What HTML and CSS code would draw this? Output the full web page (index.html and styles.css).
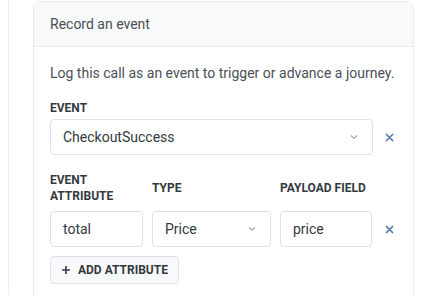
FILE: index.html
```html
<!DOCTYPE html>
<html>
<head>
<meta charset="utf-8">
<link rel="stylesheet" href="styles.css">
</head>
<body>
<div class="page">
  <div class="card">
    <div class="card-header">Record an event</div>
    <div class="card-body">
      <p class="desc">Log this call as an event to trigger or advance a journey.</p>
      <div class="label">Event</div>
      <div class="event-row">
        <div class="field select">
          <span>CheckoutSuccess</span>
          <svg class="chev" width="10" height="6" viewBox="0 0 10 6"><path d="M2 1.5 L5 4.3 L8 1.5" fill="none" stroke="#9aa0a6" stroke-width="1.1"/></svg>
        </div>
        <button class="remove" aria-label="remove">
          <svg width="9" height="9" viewBox="0 0 10 10"><path d="M1.5 1.5 L8.5 8.5 M8.5 1.5 L1.5 8.5" stroke="#5b7fb3" stroke-width="1.7" stroke-linecap="round"/></svg>
        </button>
      </div>
      <div class="attr-grid">
        <div class="label col">Event<br>attribute</div>
        <div class="label col">Type</div>
        <div class="label col">Payload field</div>
        <div></div>
        <div class="field">total</div>
        <div class="field select">
          <span>Price</span>
          <svg class="chev" width="10" height="6" viewBox="0 0 10 6"><path d="M2 1.5 L5 4.3 L8 1.5" fill="none" stroke="#9aa0a6" stroke-width="1.1"/></svg>
        </div>
        <div class="field">price</div>
        <button class="remove" aria-label="remove">
          <svg width="9" height="9" viewBox="0 0 10 10"><path d="M1.5 1.5 L8.5 8.5 M8.5 1.5 L1.5 8.5" stroke="#5b7fb3" stroke-width="1.7" stroke-linecap="round"/></svg>
        </button>
      </div>
      <button class="add-btn">
        <svg width="10" height="10" viewBox="0 0 10 10"><path d="M5 1 V9 M1 5 H9" stroke="#343a40" stroke-width="1.6"/></svg>
        <span>Add attribute</span>
      </button>
    </div>
  </div>
</div>
</body>
</html>
```
FILE: styles.css
```css
* { box-sizing: border-box; }
html, body { margin: 0; padding: 0; background: #fff; }
body {
  font-family: Roboto, "Noto Sans", sans-serif;
  color: #343a40;
  width: 438px;
  height: 295px;
  overflow: hidden;
}
.page {
  margin-left: 8px;
  border-left: 1px solid #eceef1;
  padding: 1px 24px 0 24px;
  height: 295px;
  overflow: hidden;
}
.card {
  width: 381px;
  border: 1px solid #e9ecef;
  border-radius: 7px;
  height: 310px;
}
.card-header {
  background: #f8f9fa;
  border-bottom: 1px solid #e9ecef;
  border-radius: 7px 7px 0 0;
  height: 45px;
  padding: 0 16px;
  display: flex;
  align-items: center;
  font-size: 14px;
  color: #495057;
}
.card-body {
  padding: 16px 7px 0 16px;
}
.desc {
  margin: 0;
  font-size: 14px;
  line-height: 20px;
  color: #495057;
}
.label {
  font-size: 12px;
  font-weight: 700;
  text-transform: uppercase;
  color: #343a40;
  line-height: 16px;
}
.card-body > .label {
  margin-top: 17px;
  margin-bottom: 3px;
}
.event-row {
  display: grid;
  grid-template-columns: 1fr 33px;
  align-items: center;
}
.field {
  height: 36px;
  border: 1px solid #dee2e6;
  border-radius: 4px;
  padding: 0 12px;
  display: flex;
  align-items: center;
  font-size: 14px;
  color: #343a40;
  background: #fff;
}
.select {
  justify-content: space-between;
}
.chev { flex: none; margin-right: 1px; }
.remove {
  border: 0;
  background: none;
  padding: 0;
  height: 36px;
  display: flex;
  align-items: center;
  justify-content: center;
  cursor: pointer;
}
.attr-grid {
  display: grid;
  grid-template-columns: 93px 119px 92px 16px;
  column-gap: 9px;
  margin-top: 17px;
  align-items: center;
}
.attr-grid > .label { margin-bottom: 7px; }
.add-btn {
  margin-top: 9px;
  height: 28px;
  padding: 0 10px;
  border: 1px solid #dee2e6;
  border-radius: 4px;
  background: #f8f9fa;
  display: inline-flex;
  align-items: center;
  gap: 7px;
  font-family: Roboto, "Noto Sans", sans-serif;
  font-size: 12px;
  font-weight: 700;
  text-transform: uppercase;
  color: #343a40;
}
```
